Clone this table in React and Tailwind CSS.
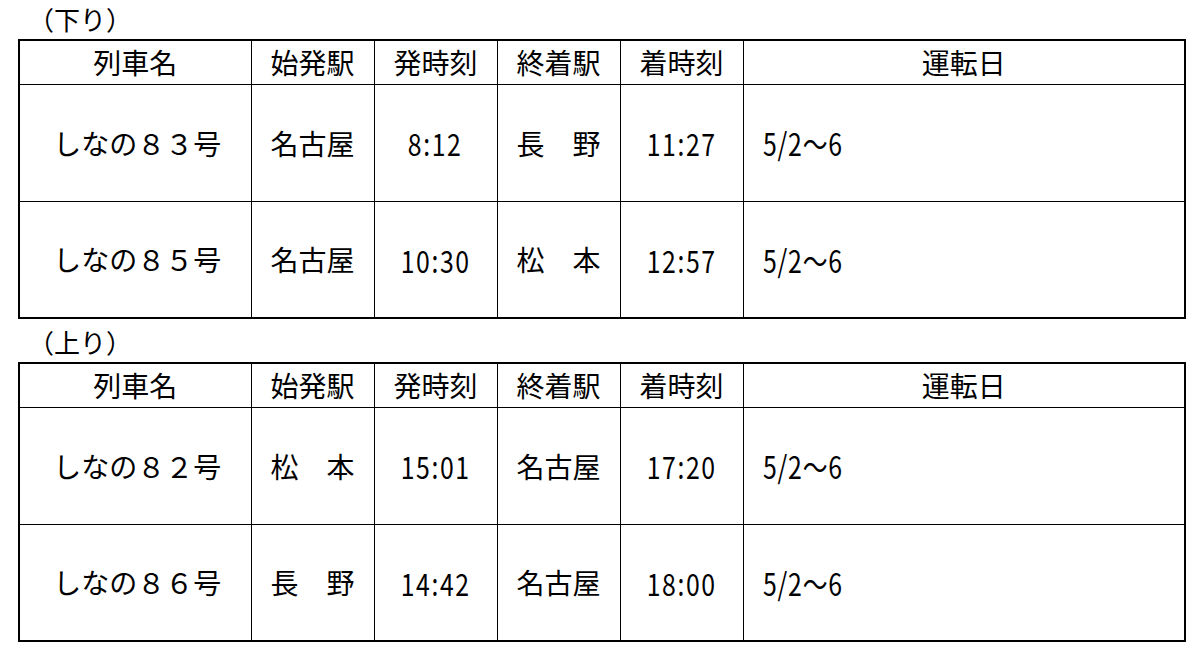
const font = { fontFamily: '"Noto Sans CJK JP", "Noto Sans", sans-serif' };

const headers = ["列車名", "始発駅", "発時刻", "終着駅", "着時刻", "運転日"];

const down = [
  ["しなの８３号", "名古屋", "8:12", "長　野", "11:27", "5/2〜6"],
  ["しなの８５号", "名古屋", "10:30", "松　本", "12:57", "5/2〜6"],
];

const up = [
  ["しなの８２号", "松　本", "15:01", "名古屋", "17:20", "5/2〜6"],
  ["しなの８６号", "長　野", "14:42", "名古屋", "18:00", "5/2〜6"],
];

// half-width digits in the source are tall and narrow
function Num({ children, left }) {
  return (
    <span
      className={
        left
          ? "inline-block origin-left scale-x-[0.8] text-[31px] tracking-[1px]"
          : "inline-block origin-center scale-x-[0.8] text-[31px] tracking-[2px]"
      }
    >
      {children}
    </span>
  );
}

function Timetable({ rows }) {
  return (
    <table className="w-[1168px] table-fixed border-collapse border-2 border-black text-black">
      <colgroup>
        <col className="w-[232px]" />
        <col className="w-[123px]" />
        <col className="w-[123px]" />
        <col className="w-[123px]" />
        <col className="w-[123px]" />
        <col />
      </colgroup>
      <thead>
        <tr className="h-[44px]">
          {headers.map((h) => (
            <th key={h} className="border border-black p-0 text-center align-middle text-[28px] font-normal leading-none">
              {h}
            </th>
          ))}
        </tr>
      </thead>
      <tbody>
        {rows.map((r) => (
          <tr key={r[0]} className="h-[117px]">
            <td className="border border-black p-0 pl-[4px] text-center align-middle text-[28px] leading-none">{r[0]}</td>
            <td className="border border-black p-0 text-center align-middle text-[28px] leading-none">{r[1]}</td>
            <td className="border border-black p-0 text-center align-middle leading-none">
              <Num>{r[2]}</Num>
            </td>
            <td className="border border-black p-0 text-center align-middle text-[28px] leading-none">{r[3]}</td>
            <td className="border border-black p-0 text-center align-middle leading-none">
              <Num>{r[4]}</Num>
            </td>
            <td className="border border-black p-0 pl-[19px] text-left align-middle leading-none">
              <Num left>{r[5]}</Num>
            </td>
          </tr>
        ))}
      </tbody>
    </table>
  );
}

export default function App() {
  return (
    <div className="w-[1200px] h-[657px] bg-white pl-[18px]" style={font}>
      <div className="h-[39px] pl-[10px] pt-[4px] text-[26px] leading-[30px] text-black">（下り）</div>
      <Timetable rows={down} />
      <div className="h-[43px] pl-[10px] pt-[8px] text-[26px] leading-[30px] text-black">（上り）</div>
      <Timetable rows={up} />
    </div>
  );
}
